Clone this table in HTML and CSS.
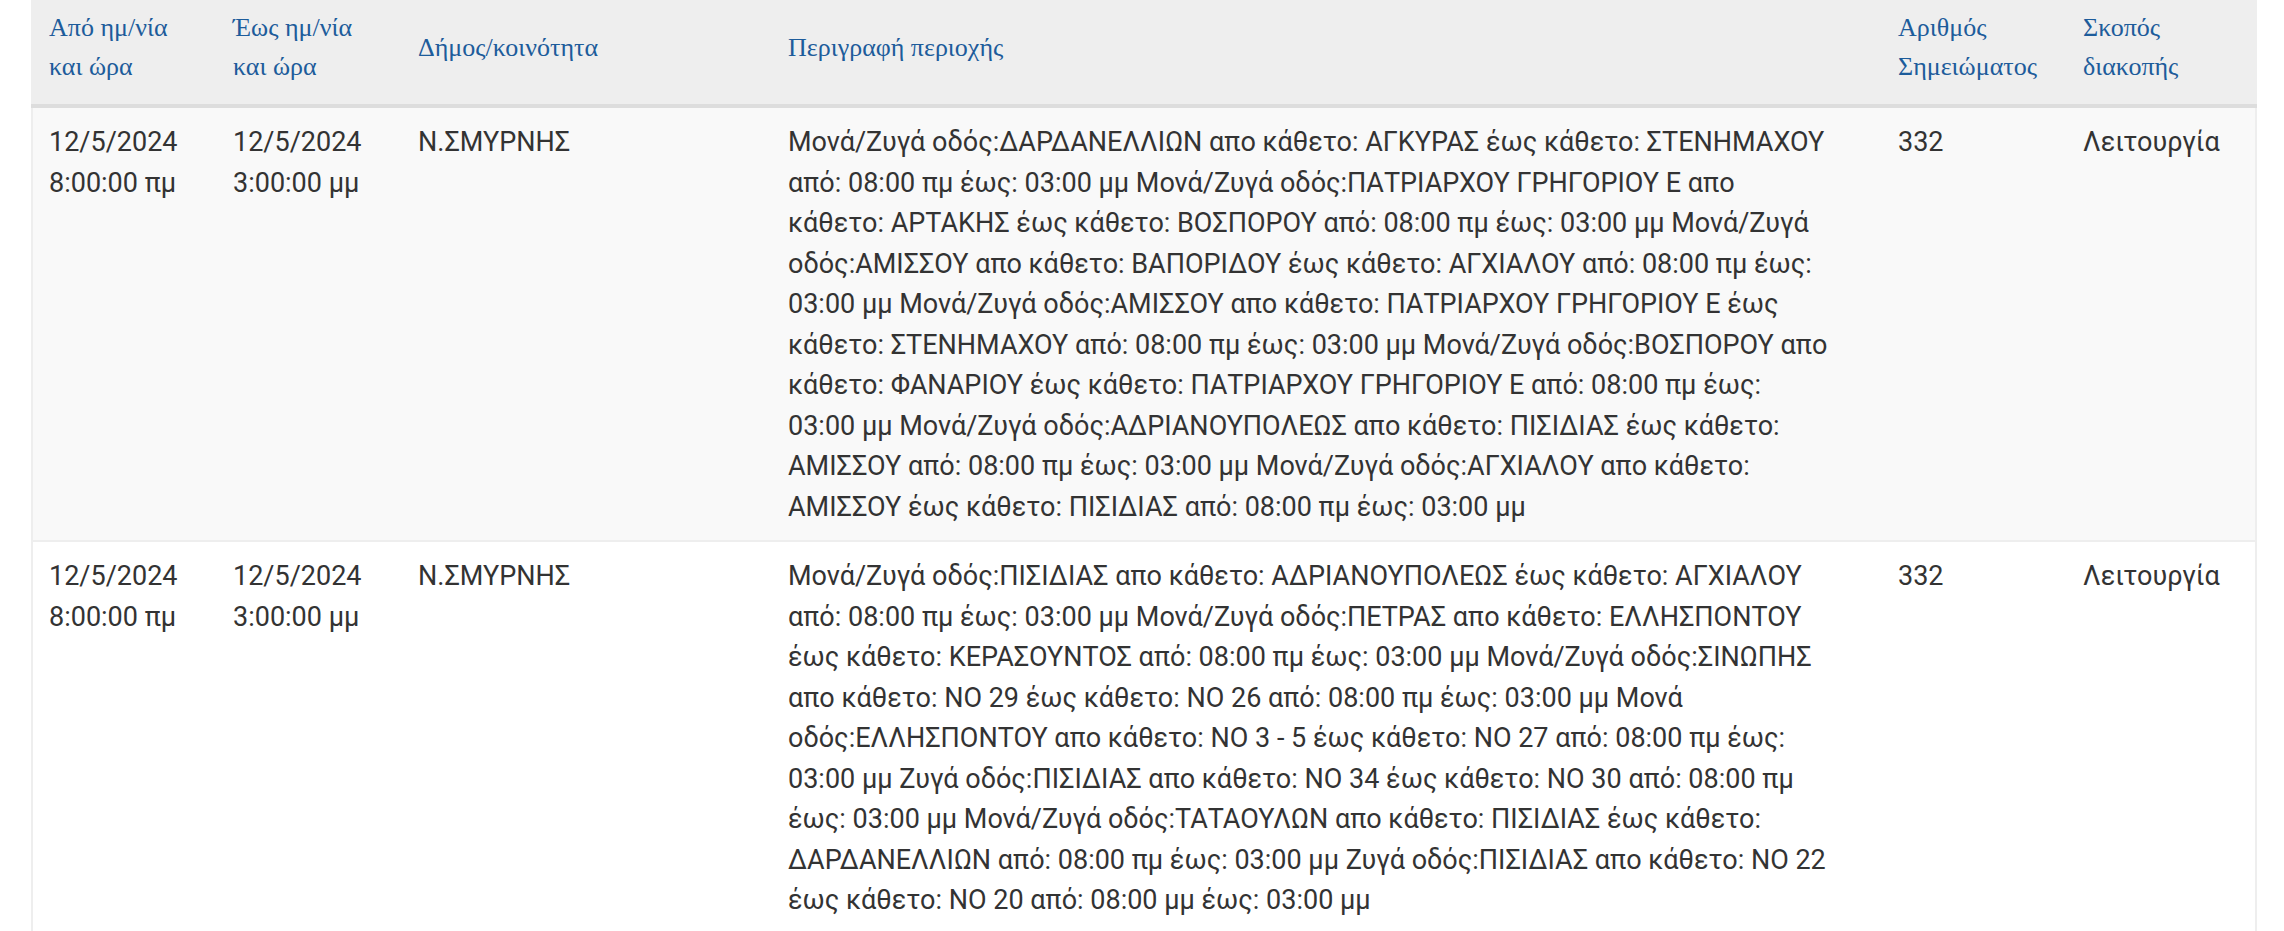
FILE: index.html
```html
<!DOCTYPE html>
<html lang="el">
<head>
  <meta charset="UTF-8">
  <meta name="viewport" content="width=device-width, initial-scale=1.0">
  <title>Προγραμματισμένες διακοπές</title>
  <link rel="stylesheet" href="styles.css">
</head>
<body>
  <table class="outages">
    <colgroup>
      <col class="col-date">
      <col class="col-date">
      <col class="col-area">
      <col class="col-desc">
      <col class="col-num">
      <col class="col-reason">
    </colgroup>
    <thead>
      <tr>
        <th>Από ημ/νία και ώρα</th>
        <th>Έως ημ/νία και ώρα</th>
        <th>Δήμος/κοινότητα</th>
        <th>Περιγραφή περιοχής</th>
        <th>Αριθμός Σημειώματος</th>
        <th>Σκοπός διακοπής</th>
      </tr>
    </thead>
    <tbody>
      <tr>
        <td>12/5/2024 8:00:00 πμ</td>
        <td>12/5/2024 3:00:00 μμ</td>
        <td>Ν.ΣΜΥΡΝΗΣ</td>
        <td class="desc">Μονά/Ζυγά οδός:ΔΑΡΔΑΝΕΛΛΙΩΝ απο κάθετο: ΑΓΚΥΡΑΣ έως κάθετο: ΣΤΕΝΗΜΑΧΟΥ<br>
          από: 08:00 πμ έως: 03:00 μμ Μονά/Ζυγά οδός:ΠΑΤΡΙΑΡΧΟΥ ΓΡΗΓΟΡΙΟΥ Ε απο<br>
          κάθετο: ΑΡΤΑΚΗΣ έως κάθετο: ΒΟΣΠΟΡΟΥ από: 08:00 πμ έως: 03:00 μμ Μονά/Ζυγά<br>
          οδός:ΑΜΙΣΣΟΥ απο κάθετο: ΒΑΠΟΡΙΔΟΥ έως κάθετο: ΑΓΧΙΑΛΟΥ από: 08:00 πμ έως:<br>
          03:00 μμ Μονά/Ζυγά οδός:ΑΜΙΣΣΟΥ απο κάθετο: ΠΑΤΡΙΑΡΧΟΥ ΓΡΗΓΟΡΙΟΥ Ε έως<br>
          κάθετο: ΣΤΕΝΗΜΑΧΟΥ από: 08:00 πμ έως: 03:00 μμ Μονά/Ζυγά οδός:ΒΟΣΠΟΡΟΥ απο<br>
          κάθετο: ΦΑΝΑΡΙΟΥ έως κάθετο: ΠΑΤΡΙΑΡΧΟΥ ΓΡΗΓΟΡΙΟΥ Ε από: 08:00 πμ έως:<br>
          03:00 μμ Μονά/Ζυγά οδός:ΑΔΡΙΑΝΟΥΠΟΛΕΩΣ απο κάθετο: ΠΙΣΙΔΙΑΣ έως κάθετο:<br>
          ΑΜΙΣΣΟΥ από: 08:00 πμ έως: 03:00 μμ Μονά/Ζυγά οδός:ΑΓΧΙΑΛΟΥ απο κάθετο:<br>
          ΑΜΙΣΣΟΥ έως κάθετο: ΠΙΣΙΔΙΑΣ από: 08:00 πμ έως: 03:00 μμ</td>
        <td>332</td>
        <td>Λειτουργία</td>
      </tr>
      <tr>
        <td>12/5/2024 8:00:00 πμ</td>
        <td>12/5/2024 3:00:00 μμ</td>
        <td>Ν.ΣΜΥΡΝΗΣ</td>
        <td class="desc">Μονά/Ζυγά οδός:ΠΙΣΙΔΙΑΣ απο κάθετο: ΑΔΡΙΑΝΟΥΠΟΛΕΩΣ έως κάθετο: ΑΓΧΙΑΛΟΥ<br>
          από: 08:00 πμ έως: 03:00 μμ Μονά/Ζυγά οδός:ΠΕΤΡΑΣ απο κάθετο: ΕΛΛΗΣΠΟΝΤΟΥ<br>
          έως κάθετο: ΚΕΡΑΣΟΥΝΤΟΣ από: 08:00 πμ έως: 03:00 μμ Μονά/Ζυγά οδός:ΣΙΝΩΠΗΣ<br>
          απο κάθετο: ΝΟ 29 έως κάθετο: ΝΟ 26 από: 08:00 πμ έως: 03:00 μμ Μονά<br>
          οδός:ΕΛΛΗΣΠΟΝΤΟΥ απο κάθετο: ΝΟ 3 - 5 έως κάθετο: ΝΟ 27 από: 08:00 πμ έως:<br>
          03:00 μμ Ζυγά οδός:ΠΙΣΙΔΙΑΣ απο κάθετο: ΝΟ 34 έως κάθετο: ΝΟ 30 από: 08:00 πμ<br>
          έως: 03:00 μμ Μονά/Ζυγά οδός:ΤΑΤΑΟΥΛΩΝ απο κάθετο: ΠΙΣΙΔΙΑΣ έως κάθετο:<br>
          ΔΑΡΔΑΝΕΛΛΙΩΝ από: 08:00 πμ έως: 03:00 μμ Ζυγά οδός:ΠΙΣΙΔΙΑΣ απο κάθετο: ΝΟ 22<br>
          έως κάθετο: ΝΟ 20 από: 08:00 μμ έως: 03:00 μμ</td>
        <td>332</td>
        <td>Λειτουργία</td>
      </tr>
    </tbody>
  </table>
</body>
</html>
```

FILE: styles.css
```css
body {
  margin: 0;
  padding: 0 27px 0 31px;
  background-color: #fff;
  font-family: Roboto, "Noto Sans", sans-serif;
  font-size: 27px;
  line-height: 40.5px;
  color: #333;
}
.outages {
  width: 2226px;
  border-collapse: collapse;
  table-layout: fixed;
  border-left: 2px solid #eee;
  border-right: 2px solid #eee;
}
.col-date { width: 185px; }
.col-area { width: 370px; }
.col-desc { width: 1110px; }
.col-num { width: 185px; }
.col-reason { width: 189px; }
.outages th {
  padding: 8px 16px 18px;
  background-color: #eee;
  border-bottom: 4px solid #ddd;
  font-family: "Liberation Serif", "Times New Roman", serif;
  font-size: 26px;
  font-weight: normal;
  line-height: 39px;
  color: #1d5c9b;
  text-align: left;
  vertical-align: middle;
}
.outages td {
  padding: 14px 16px 13px;
  border-bottom: 2px solid #eee;
  vertical-align: top;
  text-align: left;
}
.outages td.desc {
  padding-right: 10px;
}
.outages tbody tr:nth-child(odd) {
  background-color: #f9f9f9;
}
```
